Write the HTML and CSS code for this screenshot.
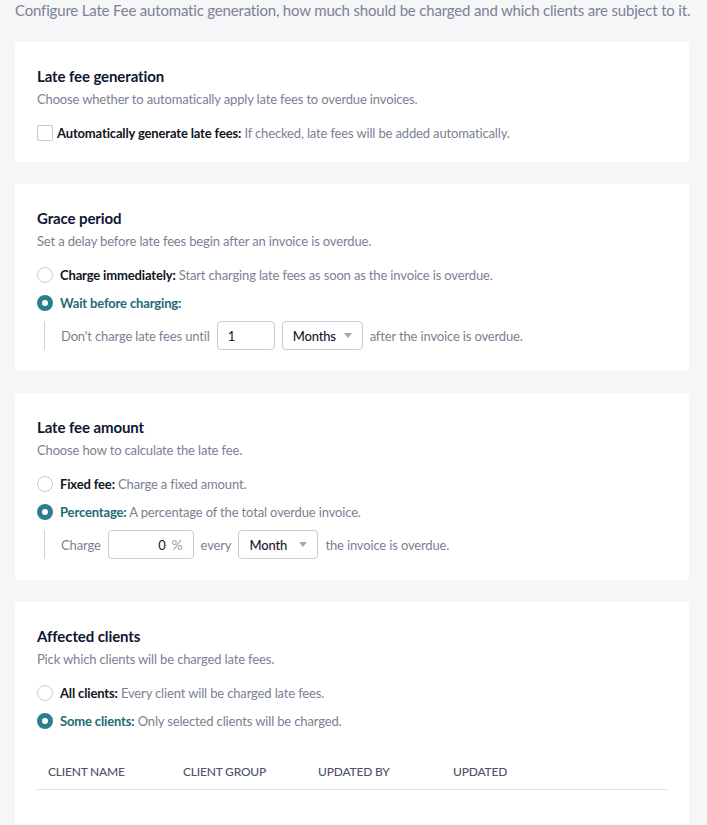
FILE: index.html
```html
<!DOCTYPE html>
<html>
<head>
<meta charset="utf-8">
<link rel="stylesheet" href="styles.css">
</head>
<body>
<div class="page">
  <p class="intro">Configure Late Fee automatic generation, how much should be charged and which clients are subject to it.</p>

  <section class="card first">
    <h2 class="card-title">Late fee generation</h2>
    <p class="card-sub">Choose whether to automatically apply late fees to overdue invoices.</p>
    <div class="options">
      <label class="option check-option">
        <span class="checkbox"></span>
        <span class="opt-text"><b class="opt-label">Automatically generate late fees:</b> If checked, late fees will be added automatically.</span>
      </label>
    </div>
  </section>

  <section class="card">
    <h2 class="card-title">Grace period</h2>
    <p class="card-sub">Set a delay before late fees begin after an invoice is overdue.</p>
    <div class="options">
      <label class="option">
        <span class="radio"></span>
        <span class="opt-text"><b class="opt-label">Charge immediately:</b> Start charging late fees as soon as the invoice is overdue.</span>
      </label>
      <label class="option">
        <span class="radio checked"></span>
        <span class="opt-text"><b class="opt-label active">Wait before charging:</b></span>
      </label>
      <div class="subrow">
        <span>Don't charge late fees until</span>
        <span class="field num">1</span>
        <span class="field select w81">Months<i class="caret"></i></span>
        <span>after the invoice is overdue.</span>
      </div>
    </div>
  </section>

  <section class="card">
    <h2 class="card-title">Late fee amount</h2>
    <p class="card-sub">Choose how to calculate the late fee.</p>
    <div class="options">
      <label class="option">
        <span class="radio"></span>
        <span class="opt-text"><b class="opt-label">Fixed fee:</b> Charge a fixed amount.</span>
      </label>
      <label class="option">
        <span class="radio checked"></span>
        <span class="opt-text"><b class="opt-label active">Percentage:</b> A percentage of the total overdue invoice.</span>
      </label>
      <div class="subrow">
        <span>Charge</span>
        <span class="field pct"><span class="pct-val">0</span><span class="pct-sign">%</span></span>
        <span>every</span>
        <span class="field select w80">Month<i class="caret"></i></span>
        <span>the invoice is overdue.</span>
      </div>
    </div>
  </section>

  <section class="card last">
    <h2 class="card-title">Affected clients</h2>
    <p class="card-sub">Pick which clients will be charged late fees.</p>
    <div class="options">
      <label class="option">
        <span class="radio"></span>
        <span class="opt-text"><b class="opt-label">All clients:</b> Every client will be charged late fees.</span>
      </label>
      <label class="option">
        <span class="radio checked"></span>
        <span class="opt-text"><b class="opt-label active">Some clients:</b> Only selected clients will be charged.</span>
      </label>
    </div>
    <div class="table-head">
      <span class="th">Client name</span>
      <span class="th">Client group</span>
      <span class="th">Updated by</span>
      <span class="th">Updated</span>
    </div>
  </section>
</div>
</body>
</html>
```
FILE: styles.css
```css
* { box-sizing: border-box; }
html, body { margin: 0; padding: 0; }
body {
  background: #f5f6f8;
  font-family: Lato, "Noto Sans", sans-serif;
  color: #7b7f93;
  font-size: 13px;
  letter-spacing: -0.15px;
}
.page {
  width: 674px;
  margin-left: 15px;
}
.intro {
  margin: 0 0 22px;
  font-size: 15px;
  line-height: 20px;
  letter-spacing: -0.18px;
  color: #7d8194;
  white-space: nowrap;
}
.card {
  background: #ffffff;
  padding: 24px 22px 21px;
  margin-bottom: 22px;
}
.card.first { padding-bottom: 19px; }
.card.last { padding-bottom: 34px; }
.card-title {
  margin: 0;
  font-size: 15px;
  line-height: 20px;
  font-weight: 700;
  color: #0d1634;
  letter-spacing: -0.1px;
}
.card-sub {
  margin: 4px 0 0;
  line-height: 18px;
}
.options {
  margin-top: 15px;
  display: flex;
  flex-direction: column;
  gap: 8px;
}
.option {
  display: flex;
  align-items: center;
  gap: 7px;
  height: 20px;
}
.option.check-option { gap: 4px; }
.opt-text { white-space: nowrap; }
.opt-label { color: #121521; font-weight: 700; }
.opt-label.active { color: #236a77; }
.checkbox {
  width: 16px;
  height: 16px;
  border: 1px solid #c6c8d0;
  border-radius: 2px;
  background: #fff;
  flex: none;
}
.radio {
  width: 16px;
  height: 16px;
  border: 1px solid #cbcdd4;
  border-radius: 50%;
  background: #fff;
  flex: none;
}
.radio.checked {
  border: 5px solid #2a7f8c;
}
.subrow {
  margin-left: 7px;
  border-left: 1px solid #cfd1d8;
  padding-left: 16px;
  display: flex;
  align-items: center;
  gap: 7px;
  height: 29px;
  white-space: nowrap;
}
.field {
  height: 29px;
  border: 1px solid #c9cbd3;
  border-radius: 4px;
  background: #fff;
  display: flex;
  align-items: center;
  padding: 0 10px;
  color: #151a2b;
  font-size: 13px;
}
.field.num { width: 58px; }
.field.select {
  justify-content: space-between;
  font-weight: 500;
}
.w81 { width: 81px; }
.w80 { width: 80px; }
.caret {
  width: 0;
  height: 0;
  border-left: 4px solid transparent;
  border-right: 4px solid transparent;
  border-top: 5px solid #a4a7b2;
}
.field.pct {
  width: 86px;
  justify-content: flex-end;
  gap: 6px;
}
.pct-val { color: #151a2b; }
.pct-sign { color: #9a9eab; font-size: 14px; }
.table-head {
  margin-top: 24px;
  display: grid;
  grid-template-columns: 135px 135px 135px 1fr;
  padding: 9px 0 9px 11px;
  border-bottom: 1px solid #dfe1e6;
}
.th {
  font-size: 12px;
  line-height: 16px;
  font-weight: 500;
  text-transform: uppercase;
  color: #4f5468;
  letter-spacing: -0.2px;
}
```
